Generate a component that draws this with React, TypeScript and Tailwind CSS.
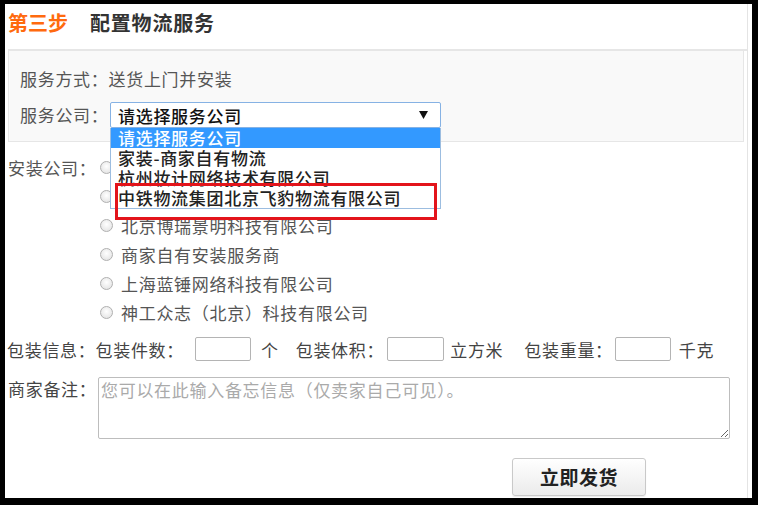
import React from "react";

const listItems = ["请选择服务公司", "家装-商家自有物流", "杭州妆计网络技术有限公司", "中铁物流集团北京飞豹物流有限公司"];

// the first two options sit under the open dropdown, only their radios peek out
const installers = ["", "", "北京博瑞景明科技有限公司", "商家自有安装服务商", "上海蓝锤网络科技有限公司", "神工众志（北京）科技有限公司"];

const Radio: React.FC = () => (
  <span className="w-[13px] h-[13px] rounded-full border border-[#b0b0b0] bg-[radial-gradient(circle_at_50%_40%,#ffffff_0%,#dedede_100%)] shrink-0" />
);

const App: React.FC = () => {
  return (
    <div className="w-[758px] h-[505px] bg-black pt-[4px] pl-[5px] pr-[6px] pb-[7px] font-['Noto_Sans_CJK_SC','Liberation_Sans',sans-serif]">
      <div className="h-full bg-white pr-[4px]">
        <div className="h-full border-r border-[#e4e4e4] pl-[3px]">
          {/* step header */}
          <div className="h-[47px] pb-[7px] flex items-center border-b-2 border-[#e6e6e6]">
            <span className="text-[20px] font-bold text-[#ff6a0e] leading-none">第三步</span>
            <span className="ml-[22px] text-[20px] font-bold text-[#333] tracking-[0.8px] leading-none">配置物流服务</span>
          </div>

          {/* service panel */}
          <div className="mr-[3px] h-[91px] bg-[#f9f9f9] border-x border-b border-[#e6e6e6] pt-[17px] pl-[11px] text-[17px] tracking-[0.7px] text-[#555]">
            <div className="h-[22px] leading-[22px]">服务方式：送货上门并安装</div>
            <div className="mt-[12px] flex items-center h-[26px]">
              <span className="w-[90px] leading-[26px]">服务公司：</span>
              <div className="relative z-10">
                <div className="w-[331px] h-[26px] border border-[#86b2e4] rounded-[2px] bg-white flex items-center justify-between pl-[7px] pr-[12px] text-[#111] font-medium">
                  <span className="leading-none">请选择服务公司</span>
                  <svg width="9" height="8" viewBox="0 0 9 8">
                    <path d="M0 0 L9 0 L4.5 8 Z" fill="#111" />
                  </svg>
                </div>
                <div className="absolute left-0 top-full w-[331px] bg-white border-x border-b border-[#9cbde0] font-medium">
                  {listItems.map((item, i) => (
                    <div
                      key={item}
                      className={
                        i === 0
                          ? "h-[20px] leading-[20px] pl-[7px] bg-[#3399ff] text-white"
                          : "h-[20px] leading-[20px] pl-[7px] text-[#222]"
                      }
                    >
                      {item}
                    </div>
                  ))}
                </div>
                <div className="absolute left-[5px] top-[81px] w-[322px] h-[37px] border-[3px] border-[#e3141b]" />
              </div>
            </div>
          </div>

          {/* installers */}
          <div className="mt-[11px] flex text-[17px] tracking-[0.7px] text-[#555]">
            <span className="w-[92px] h-[29px] leading-[29px]">安装公司：</span>
            <div className="flex flex-col">
              {installers.map((name, i) => (
                <label key={i} className="h-[29px] flex items-center gap-[8px]">
                  <Radio />
                  {name && <span className="leading-none">{name}</span>}
                </label>
              ))}
            </div>
          </div>

          {/* package info */}
          <div className="mt-[10px] h-[24px] flex items-center text-[17px] tracking-[0.7px] text-[#444] leading-none">
            <span className="-ml-[1px]">包装信息：包装件数：</span>
            <input className="ml-[11px] w-[56px] h-[24px] border border-[#b4b4b4] rounded-[2px] bg-white" />
            <span className="ml-[10px]">个</span>
            <span className="ml-[17px]">包装体积：</span>
            <input className="ml-[3px] w-[57px] h-[24px] border border-[#b4b4b4] rounded-[2px] bg-white" />
            <span className="ml-[6px]">立方米</span>
            <span className="ml-[21px]">包装重量：</span>
            <input className="ml-[2px] w-[56px] h-[24px] border border-[#b4b4b4] rounded-[2px] bg-white" />
            <span className="ml-[8px]">千克</span>
          </div>

          {/* remarks */}
          <div className="mt-[16px] flex items-start text-[17px] tracking-[0.7px] text-[#444]">
            <span className="w-[90px] h-[24px] leading-[24px]">商家备注：</span>
            <textarea
              className="w-[632px] h-[62px] border border-[#bdbdbd] rounded-[2px] px-[2px] pt-[1px] leading-[22px] bg-white placeholder:text-[#aaa] resize"
              placeholder="您可以在此输入备忘信息（仅卖家自己可见）。"
            />
          </div>

          <div className="mt-[19px] flex">
            <button className="ml-[504px] w-[134px] h-[38px] border border-[#c9c9c9] rounded-[3px] bg-linear-to-b from-white to-[#ebebeb] text-[19px] font-bold text-[#222] tracking-[0.5px] shadow-[0_1px_1px_rgba(0,0,0,0.08)]">
              立即发货
            </button>
          </div>
        </div>
      </div>
    </div>
  );
};

export default App;
